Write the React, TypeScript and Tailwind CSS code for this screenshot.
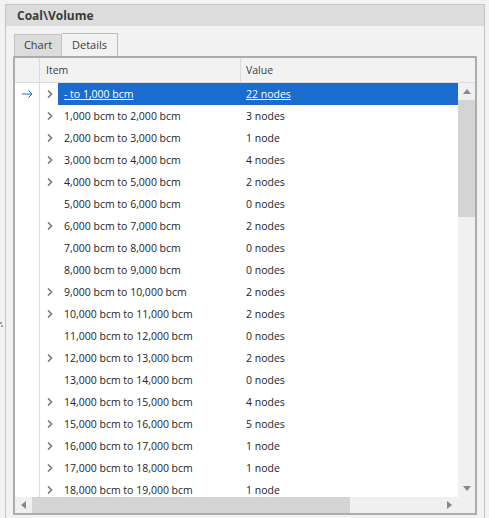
import * as React from "react"

const rows: [string, string, boolean][] = [
    ["- to 1,000 bcm", "22 nodes", true],
    ["1,000 bcm to 2,000 bcm", "3 nodes", true],
    ["2,000 bcm to 3,000 bcm", "1 node", true],
    ["3,000 bcm to 4,000 bcm", "4 nodes", true],
    ["4,000 bcm to 5,000 bcm", "2 nodes", true],
    ["5,000 bcm to 6,000 bcm", "0 nodes", false],
    ["6,000 bcm to 7,000 bcm", "2 nodes", true],
    ["7,000 bcm to 8,000 bcm", "0 nodes", false],
    ["8,000 bcm to 9,000 bcm", "0 nodes", false],
    ["9,000 bcm to 10,000 bcm", "2 nodes", true],
    ["10,000 bcm to 11,000 bcm", "2 nodes", true],
    ["11,000 bcm to 12,000 bcm", "0 nodes", false],
    ["12,000 bcm to 13,000 bcm", "2 nodes", true],
    ["13,000 bcm to 14,000 bcm", "0 nodes", false],
    ["14,000 bcm to 15,000 bcm", "4 nodes", true],
    ["15,000 bcm to 16,000 bcm", "5 nodes", true],
    ["16,000 bcm to 17,000 bcm", "1 node", true],
    ["17,000 bcm to 18,000 bcm", "1 node", true],
    ["18,000 bcm to 19,000 bcm", "1 node", true],
]

function Chevron() {
    return (
        <svg width="6" height="8" viewBox="0 0 6 8">
            <path d="M1 0.5 L4.5 4 L1 7.5" fill="none" stroke="#7a7a7a" strokeWidth="1.6" />
        </svg>
    )
}

export default function App() {
    return (
        <div className="flex w-[489px] h-[518px] bg-[#f2f2f2] overflow-hidden text-[#252525] font-['Open_Sans',sans-serif] text-[10.5px]">
            {/* splitter strip */}
            <div className="w-[5px] flex flex-col items-start justify-center pt-[130px]">
                <div className="flex flex-col gap-[1px]">
                    <div className="w-[2px] h-[2px] bg-[#a0a0a0]" />
                    <div className="w-[2px] h-[2px] bg-[#a0a0a0] ml-[1px]" />
                </div>
            </div>

            {/* panel */}
            <div className="w-[480px] h-[520px] mt-[4px] border border-[#c4c4c4] flex flex-col">
                <div className="h-[21px] bg-[#dcdcdc] flex items-center pl-[11px] font-bold text-[12px] text-[#3b3b3b]">
                    Coal\Volume
                </div>

                <div className="flex pl-[8px] pt-[7px] h-[30px] items-end text-[11px]">
                    <div className="w-[48px] h-[22px] bg-[#dcdcdc] border border-b-0 border-[#c2c2c2] flex items-center justify-center text-[#3b3b3b]">
                        Chart
                    </div>
                    <div className="w-[56px] h-[23px] bg-[#f2f2f2] border border-b-0 border-l-0 border-[#bcbcbc] flex items-center justify-center text-[#3b3b3b]">
                        Details
                    </div>
                </div>

                {/* grid */}
                <div className="ml-[7px] w-[464px] h-[459px] border-2 border-[#acacac] bg-white flex flex-col">
                    {/* header */}
                    <div className="h-[25px] flex bg-[#f2f2f2] border-b border-[#dcdcdc] text-[#404040] shrink-0">
                        <div className="w-[25px] border-r border-[#dcdcdc]" />
                        <div className="w-[201px] border-r border-[#dcdcdc] flex items-center pl-[6px] pt-[2px]">Item</div>
                        <div className="flex-1 flex items-center pl-[5px] pt-[2px]">Value</div>
                    </div>

                    <div className="flex flex-1 min-h-0">
                        <div className="flex-1 flex flex-col overflow-hidden">
                            {rows.map(([item, value, exp], i) => {
                                const sel = i === 0
                                return (
                                    <div key={i} className="h-[22px] flex shrink-0">
                                        <div className="w-[25px] border-r border-[#dcdcdc] flex items-center justify-center">
                                            {sel && (
                                                <svg width="11" height="8" viewBox="0 0 11 8">
                                                    <path d="M0 4 H10 M6.5 0.5 L10 4 L6.5 7.5" fill="none" stroke="#1b6ccf" strokeWidth="1" />
                                                </svg>
                                            )}
                                        </div>
                                        <div className="w-[18px] flex items-center pl-[7px]">{exp && <Chevron />}</div>
                                        <div className={`flex-1 flex ${sel ? "bg-[#1b6ccf] text-white underline" : ""}`}>
                                            <div className="w-[182px] flex items-center pl-[6px] pt-[2px] whitespace-nowrap">{item}</div>
                                            <div className="flex-1 flex items-center pl-[6px] pt-[2px] whitespace-nowrap">{value}</div>
                                        </div>
                                    </div>
                                )
                            })}
                        </div>
                        {/* vertical scrollbar */}
                        <div className="w-[17px] bg-[#f0f0f0] flex flex-col shrink-0">
                            <div className="h-[17px] flex items-center justify-center">
                                <svg width="8" height="5" viewBox="0 0 8 5"><path d="M0 5 L4 0 L8 5 Z" fill="#888" /></svg>
                            </div>
                            <div className="h-[117px] bg-[#d4d4d4]" />
                            <div className="flex-1" />
                            <div className="h-[17px] flex items-center justify-center">
                                <svg width="8" height="5" viewBox="0 0 8 5"><path d="M0 0 L8 0 L4 5 Z" fill="#888" /></svg>
                            </div>
                        </div>
                    </div>

                    {/* horizontal scrollbar */}
                    <div className="h-[16px] flex shrink-0">
                        <div className="w-[443px] bg-[#f0f0f0] flex">
                            <div className="w-[17px] flex items-center justify-center">
                                <svg width="5" height="8" viewBox="0 0 5 8"><path d="M5 0 L5 8 L0 4 Z" fill="#888" /></svg>
                            </div>
                            <div className="w-[318px] bg-[#d4d4d4]" />
                            <div className="flex-1" />
                            <div className="w-[17px] flex items-center justify-center">
                                <svg width="5" height="8" viewBox="0 0 5 8"><path d="M0 0 L5 4 L0 8 Z" fill="#888" /></svg>
                            </div>
                        </div>
                        <div className="flex-1 bg-[#f0f0f0]" />
                    </div>
                </div>
            </div>
        </div>
    )
}
